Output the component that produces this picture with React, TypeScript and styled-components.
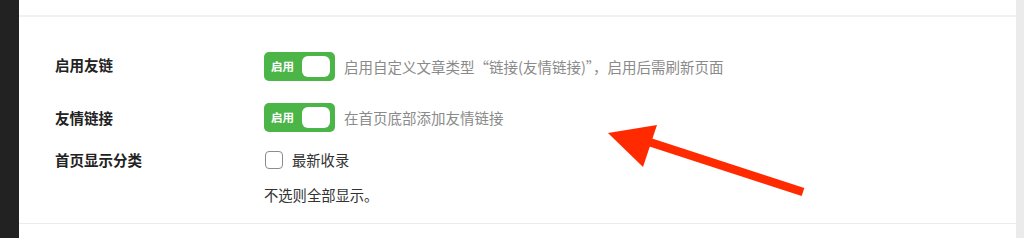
import styled, { createGlobalStyle } from "styled-components";

const GlobalStyle = createGlobalStyle`
  html, body {
    margin: 0;
    padding: 0;
    background: #ffffff;
  }
  body {
    font-family: "Noto Sans CJK SC", "Noto Sans", sans-serif;
  }
`;

const Screen = styled.div`
  display: flex;
  width: 1024px;
  height: 238px;
  overflow: hidden;
  position: relative;
`;

const Sidebar = styled.div`
  width: 19px;
  flex-shrink: 0;
  background: #222222;
`;

const Scrollbar = styled.div`
  width: 8px;
  flex-shrink: 0;
  background: #ebebeb;
`;

const Panel = styled.div`
  flex: 1;
  display: flex;
  flex-direction: column;
  background: #ffffff;
`;

const TopStrip = styled.div`
  height: 15px;
  border-bottom: 2px solid #f1f1f1;
`;

const Form = styled.div`
  display: flex;
  flex-direction: column;
  padding: 35px 0 0 36px;
  height: 207px;
  box-sizing: border-box;
  border-bottom: 1px solid #ececec;
`;

const Row = styled.div<{ $gap: number }>`
  display: grid;
  grid-template-columns: 209px 1fr;
  align-items: start;
  margin-bottom: ${(p) => p.$gap}px;
`;

const Label = styled.div<{ $top: number }>`
  font-size: 14.5px;
  font-weight: 700;
  color: #222222;
  line-height: 20px;
  padding-top: ${(p) => p.$top}px;
`;

const Field = styled.div`
  display: flex;
  flex-direction: column;
`;

const Line = styled.div`
  display: flex;
  align-items: center;
`;

const Toggle = styled.div`
  display: flex;
  align-items: center;
  justify-content: space-between;
  width: 71px;
  height: 29px;
  box-sizing: border-box;
  padding: 0 5px 0 7px;
  border-radius: 5px;
  background: #4cb548;
`;

const ToggleText = styled.span`
  color: #ffffff;
  font-size: 11.5px;
  font-weight: 700;
  line-height: 1;
`;

const Knob = styled.span`
  width: 28px;
  height: 21px;
  border-radius: 6px;
  background: #ffffff;
`;

const Hint = styled.span`
  margin-left: 9px;
  font-size: 14.5px;
  color: #8a8a8a;
  line-height: 20px;
`;

const Box = styled.span`
  width: 18px;
  height: 18px;
  box-sizing: border-box;
  border: 1.5px solid #8c8c8c;
  border-radius: 4px;
  margin-left: 1px;
  background: #ffffff;
`;

const CheckText = styled.span`
  margin-left: 9px;
  font-size: 14.3px;
  color: #333333;
  line-height: 20px;
`;

const Note = styled.div`
  margin-top: 15px;
  font-size: 14.3px;
  color: #333333;
  line-height: 20px;
`;

const Arrow = styled.svg`
  position: absolute;
  left: 0;
  top: 0;
  pointer-events: none;
`;

const Switch = () => (
  <Toggle>
    <ToggleText>启用</ToggleText>
    <Knob />
  </Toggle>
);

const App = () => {
  return (
    <>
      <GlobalStyle />
      <Screen>
        <Sidebar />
        <Panel>
          <TopStrip />
          <Form>
            <Row $gap={22}>
              <Label $top={3}>启用友链</Label>
              <Field>
                <Line>
                  <Switch />
                  <Hint>启用自定义文章类型“链接(友情链接)”，启用后需刷新页面</Hint>
                </Line>
              </Field>
            </Row>
            <Row $gap={18}>
              <Label $top={5}>友情链接</Label>
              <Field>
                <Line>
                  <Switch />
                  <Hint>在首页底部添加友情链接</Hint>
                </Line>
              </Field>
            </Row>
            <Row $gap={0}>
              <Label $top={-3}>首页显示分类</Label>
              <Field>
                <Line>
                  <Box />
                  <CheckText>最新收录</CheckText>
                </Line>
                <Note>不选则全部显示。</Note>
              </Field>
            </Row>
          </Form>
        </Panel>
        <Scrollbar />
        <Arrow width="1024" height="238" viewBox="0 0 1024 238">
          <line x1="803" y1="192" x2="640" y2="139" stroke="#ff2a00" strokeWidth="8.5" />
          <polygon points="608,133 657,125 643,167" fill="#ff2a00" />
        </Arrow>
      </Screen>
    </>
  );
};

export default App;
